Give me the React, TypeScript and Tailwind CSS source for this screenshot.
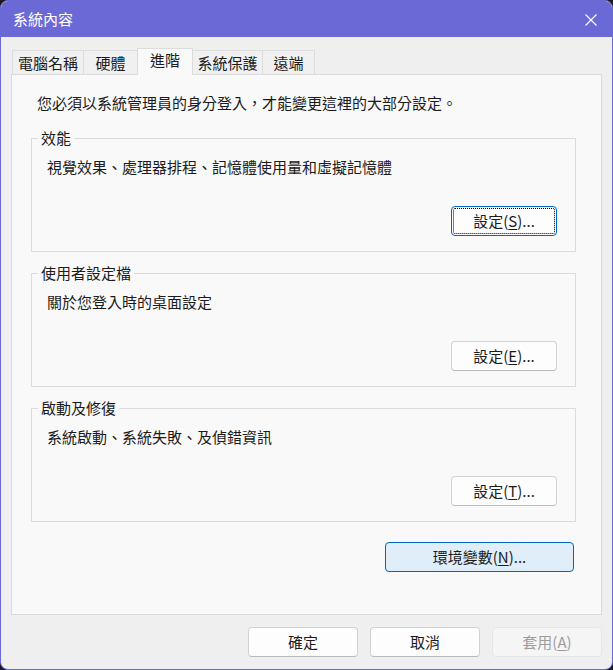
import React from "react";

const font = { fontFamily: '"Noto Sans CJK TC", "Noto Sans", sans-serif' };

function Btn({
  children,
  className = "",
  variant = "normal",
  w = "w-[106px]",
}: {
  children: React.ReactNode;
  className?: string;
  variant?: "normal" | "focus" | "accent" | "disabled";
  w?: string;
}) {
  const base =
    "h-[30px] rounded-[4px] flex items-center justify-center text-[15px] leading-[20px] " + w + " ";
  if (variant === "focus")
    return (
      <div className={base + "border border-[#0067c0] bg-[#fdfdfd] text-[#1b1b1b] p-[1px] " + className}>
        <div className="w-full h-full border border-dotted border-black rounded-[2px] flex items-center justify-center">
          {children}
        </div>
      </div>
    );
  if (variant === "accent")
    return (
      <div className={base + "border border-[#0067c0] bg-[#e0eef9] text-[#1b1b1b] " + className}>{children}</div>
    );
  if (variant === "disabled")
    return (
      <div className={base + "border border-[#e6e6e6] bg-[#f5f5f5] text-[#9d9d9d] " + className}>{children}</div>
    );
  return (
    <div
      className={
        base +
        "border border-[#d1d1d1] border-b-[#bababa] bg-[#fdfdfd] text-[#1b1b1b] " +
        className
      }
    >
      {children}
    </div>
  );
}

function Group({
  title,
  text,
  button,
}: {
  title: string;
  text: string;
  button: React.ReactNode;
}) {
  return (
    <div className="relative ml-[19px] w-[545px] h-[114px] border border-[#dcdcdc] flex flex-col">
      <span className="absolute -top-[11px] left-[6px] px-[3px] bg-[#f9f9f9] text-[15px] leading-[20px] text-[#1b1b1b]">
        {title}
      </span>
      <div className="pl-[15px] pt-[18px] text-[15px] leading-[20px] text-[#1b1b1b]">{text}</div>
      <div className="flex justify-end pr-[18px] mt-auto pb-[15px]">{button}</div>
    </div>
  );
}

const U = ({ c }: { c: string }) => <span className="underline underline-offset-[2px]">{c}</span>;

export default function App() {
  const tabs = [
    { label: "電腦名稱", w: "w-[72px]" },
    { label: "硬體", w: "w-[55px]" },
    { label: "進階", w: "w-[56px]", active: true },
    { label: "系統保護", w: "w-[71px]" },
    { label: "遠端", w: "w-[53px]" },
  ];
  return (
    <div className="w-[613px] h-[670px] bg-[#1c1c1c]" style={font}>
      <div className="w-full h-full rounded-[8px] border border-[#6b69d6] overflow-hidden bg-[#efefef] flex flex-col">
        <div className="h-[36px] bg-[#6b69d6] flex items-center justify-between pl-[12px] pr-[15px] shrink-0">
          <span className="text-white text-[15px] leading-[20px]">系統內容</span>
          <svg width="12" height="12" viewBox="0 0 12 12" className="mt-[1px]">
            <path d="M0.5 0.5 L11.5 11.5 M11.5 0.5 L0.5 11.5" stroke="white" strokeWidth="1.1" fill="none" />
          </svg>
        </div>
        <div className="flex flex-col pl-[10px] pr-[10px] pt-[11px]">
          <div className="flex items-end pl-[1px] h-[26px] relative z-10">
            {tabs.map((t) =>
              t.active ? (
                <div
                  key={t.label}
                  className={
                    t.w +
                    " h-[27px] -mb-[1px] -ml-px bg-[#f9f9f9] border border-b-0 border-[#dcdcdc] flex items-start justify-center pt-[1px] text-[15px] leading-[20px] text-[#1b1b1b]"
                  }
                >
                  {t.label}
                </div>
              ) : (
                <div
                  key={t.label}
                  className={
                    t.w +
                    " h-[24px] bg-[#f0f0f0] border border-b-0 border-[#dcdcdc] -ml-px first:ml-0 flex items-center justify-center pt-[1px] text-[15px] leading-[20px] text-[#1b1b1b]"
                  }
                >
                  {t.label}
                </div>
              )
            )}
          </div>
          <div className="w-[591px] h-[541px] bg-[#f9f9f9] border border-[#dadada] flex flex-col">
            <div className="pl-[25px] pt-[18px] text-[15px] leading-[20px] text-[#1b1b1b]">
              您必須以系統管理員的身分登入，才能變更這裡的大部分設定。
            </div>
            <div className="flex flex-col gap-[21px] mt-[25px]">
              <Group
                title="效能"
                text="視覺效果、處理器排程、記憶體使用量和虛擬記憶體"
                button={
                  <Btn variant="focus">
                    設定(<U c="S" />)...
                  </Btn>
                }
              />
              <Group
                title="使用者設定檔"
                text="關於您登入時的桌面設定"
                button={
                  <Btn>
                    設定(<U c="E" />)...
                  </Btn>
                }
              />
              <Group
                title="啟動及修復"
                text="系統啟動、系統失敗、及偵錯資訊"
                button={
                  <Btn>
                    設定(<U c="T" />)...
                  </Btn>
                }
              />
            </div>
            <div className="flex justify-end pr-[27px] mt-[20px]">
              <Btn variant="accent" w="w-[189px]">
                環境變數(<U c="N" />)...
              </Btn>
            </div>
          </div>
          <div className="flex justify-end gap-[12px] mt-[12px]">
            <Btn w="w-[110px]">確定</Btn>
            <Btn w="w-[110px]">取消</Btn>
            <Btn w="w-[110px]" variant="disabled">
              套用(<U c="A" />)
            </Btn>
          </div>
        </div>
      </div>
    </div>
  );
}
